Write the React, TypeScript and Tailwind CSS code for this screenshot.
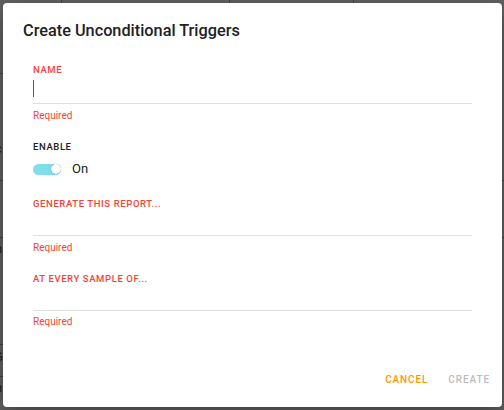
const font = { fontFamily: "Roboto, 'Liberation Sans', sans-serif" };

function Field({ label, cursor, box }: { label: string; cursor?: boolean; box: string }) {
  return (
    <div className="flex flex-col">
      <label className="text-[9.5px] font-medium tracking-[0.6px] text-[#f44336] leading-[11px]">{label}</label>
      <div className={`${box} border-b border-[#e0e0e0] flex items-end pb-[6px]`}>
        {cursor && <span className="block w-px h-[17px] bg-[#555]" />}
      </div>
      <span className="text-[10px] text-[#f44336] leading-[12px] mt-[5.5px]">Required</span>
    </div>
  );
}

export default function App() {
  return (
    <div className="relative w-[504px] h-[410px] bg-[#616161] overflow-hidden" style={font}>
      {/* page underneath the overlay */}
      <div className="absolute inset-x-0 top-0 h-[3px] flex">
        <div className="w-[62px] border-r border-[#444]" />
        <div className="w-[168px] border-r border-[#444]" />
        <div className="w-[124px] border-r border-[#444]" />
      </div>
      <div className="absolute left-0 top-[73px] w-[3px] border-t border-[#444]" />
      <div className="absolute left-0 top-[180px] w-full border-t border-[#444]" />
      <div className="absolute left-0 top-[237px] w-full border-t border-[#444]" />
      <div className="absolute left-0 top-[344px] w-[3px] border-t border-[#444]" />
      <div className="absolute left-0 top-[376px] w-[3px] border-t border-[#444]" />
      <span className="absolute left-[-5px] top-[139px] text-[13px] text-[#222]">c</span>
      <span className="absolute left-[-5px] top-[239px] text-[13px] text-[#222]">h</span>
      <span className="absolute left-[-6px] top-[347px] text-[13px] text-[#222]">G</span>
      <span className="absolute left-[-5px] top-[378px] text-[13px] text-[#222]">h</span>

      <div className="absolute left-[3px] top-[3px] w-[499px] h-[404px] bg-white rounded-[4px] shadow-[0_8px_24px_rgba(0,0,0,0.35)] flex flex-col">
        <h2 className="text-[16.3px] font-medium text-[#212121] leading-[20px] pt-[18px] pl-[20px]">
          Create Unconditional Triggers
        </h2>
        <div className="flex flex-col px-[30px] pt-[23px]">
          <Field label="NAME" cursor box="h-[29px]" />
          <div className="flex flex-col mt-[19.5px]">
            <label className="text-[9.5px] font-medium tracking-[0.6px] text-[#212121] leading-[11px]">ENABLE</label>
            <div className="flex items-center gap-[11px] mt-[11px] h-[12px]">
              <div className="relative w-[28px] h-[11px] rounded-full bg-[#80deea]">
                <span className="absolute right-0 top-[0.5px] w-[10px] h-[10px] rounded-full bg-white shadow-[0_0_1px_rgba(0,0,0,0.5)]" />
              </div>
              <span className="text-[13px] text-[#212121] leading-[12px]">On</span>
            </div>
          </div>
          <div className="mt-[23px]">
            <Field label="GENERATE THIS REPORT..." box="h-[27px]" />
          </div>
          <div className="mt-[19px]">
            <Field label="AT EVERY SAMPLE OF..." box="h-[27px]" />
          </div>
        </div>
        <div className="flex justify-end gap-[20px] pr-[12px] mt-[46px]">
          <button className="text-[10px] font-medium tracking-[0.9px] leading-[12px] text-[#ff9800]">CANCEL</button>
          <button className="text-[10px] font-medium tracking-[0.9px] leading-[12px] text-[#bdbdbd]">CREATE</button>
        </div>
      </div>
    </div>
  );
}
